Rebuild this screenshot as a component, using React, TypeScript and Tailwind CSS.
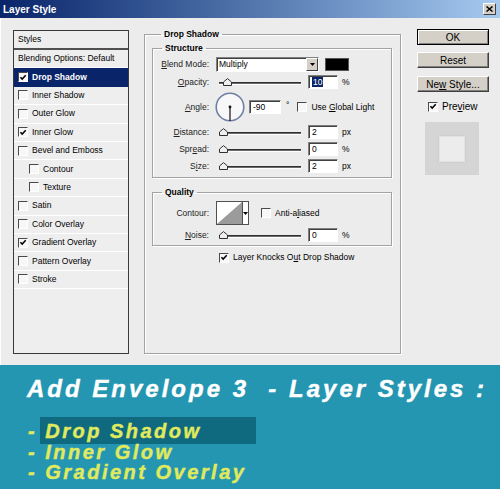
import type { ReactNode } from 'react'

const ui = "font-['Liberation_Sans',Arial,sans-serif]"

function Tick({ className = '' }: { className?: string }) {
  return (
    <svg viewBox="0 0 10 10" className={className}>
      <path d="M1.8 4.6 L4 7 L8.4 2.2" fill="none" stroke="currentColor" strokeWidth="1.9" />
    </svg>
  )
}

function Box({ on }: { on?: boolean }) {
  return (
    <span className="w-[10px] h-[10px] shrink-0 flex items-center justify-center border border-[#4a4a4a] border-r-white border-b-white bg-[#f7f7f7] text-black">
      {on && <Tick className="w-[9px] h-[9px]" />}
    </span>
  )
}

// mnemonic letter
function U({ children }: { children: ReactNode }) {
  return <span className="underline underline-offset-[1px]">{children}</span>
}

const sunken = 'border border-[#808080] border-r-white border-b-white shadow-[inset_1px_1px_0_#404040] bg-white'

function Field({ value, w = 30, selected }: { value: string; w?: number; selected?: boolean }) {
  return (
    <span className={`${sunken} h-[14px] shrink-0 flex items-center pl-[3px]`} style={{ width: w }}>
      {selected ? <span className="bg-[#0a246a] text-white leading-[10px] px-[1px]">{value}</span> : value}
    </span>
  )
}

function Slider({ at = 0 }: { at?: number }) {
  return (
    <span className="relative block w-[82px] h-[10px] shrink-0">
      <span className="absolute left-0 right-0 top-[5px] h-[3px] border-t border-[#303030] border-b border-b-white bg-[#6a6a6a]" />
      <svg className="absolute top-[1px]" style={{ left: at }} width="9" height="8" viewBox="0 0 9 8">
        <path d="M0.5 7.5 V4 L4.5 0.6 L8.5 4 V7.5 Z" fill="#efefef" stroke="#303030" />
      </svg>
    </span>
  )
}

function Label({ children }: { children: ReactNode }) {
  return <span className="w-[56px] shrink-0 text-right text-[#222]">{children}</span>
}

function SliderRow({ label, value, unit, at, selected }: { label: ReactNode; value: string; unit: string; at?: number; selected?: boolean }) {
  return (
    <div className="flex items-center h-[14px] mt-[3px]">
      <Label>{label}</Label>
      <span className="ml-[10px]"><Slider at={at} /></span>
      <span className="ml-[7px]"><Field value={value} selected={selected} /></span>
      <span className="ml-[4px]">{unit}</span>
    </div>
  )
}

function Btn({ children, main }: { children: ReactNode; main?: boolean }) {
  return (
    <div className={`h-[16px] w-[72px] flex items-center justify-center bg-[#d4d0c8] text-[10px] text-black ${main ? 'border border-black shadow-[inset_1px_1px_0_white,inset_-1px_-1px_0_#808080]' : 'border border-white border-r-[#404040] border-b-[#404040] shadow-[inset_-1px_-1px_0_#808080]'}`}>
      <span>{children}</span>
    </div>
  )
}

const effects: { name: ReactNode; on?: boolean; sub?: boolean; active?: boolean }[] = [
  { name: 'Drop Shadow', on: true, active: true },
  { name: 'Inner Shadow' },
  { name: 'Outer Glow' },
  { name: 'Inner Glow', on: true },
  { name: 'Bevel and Emboss' },
  { name: 'Contour', sub: true },
  { name: 'Texture', sub: true },
  { name: 'Satin' },
  { name: 'Color Overlay' },
  { name: 'Gradient Overlay', on: true },
  { name: 'Pattern Overlay' },
  { name: 'Stroke' },
]

function StyleList() {
  return (
    <div className="mt-[12px] ml-[12px] w-[116px] h-[324px] border border-[#3a3a3a] bg-[#eeeeee] flex flex-col">
      <div className="h-[19px] shrink-0 flex items-center pl-[4px] border-b-2 border-[#505050]">Styles</div>
      <div className="h-[18.4px] shrink-0 flex items-center pl-[4px] border-b border-white">Blending Options: Default</div>
      {effects.map((e, i) => (
        <div
          key={i}
          className={`h-[18.4px] shrink-0 flex items-center gap-[4px] border-b ${e.active ? 'bg-[#0a246a] text-white font-bold border-[#0a246a]' : 'border-white'} ${e.sub ? 'pl-[15px]' : 'pl-[4px]'}`}
        >
          <Box on={e.on} />
          <span>{e.name}</span>
        </div>
      ))}
    </div>
  )
}

const etched = 'border border-[#a2a2a2] shadow-[1px_1px_0_white,inset_1px_1px_0_white]'

function DropShadowPanel() {
  return (
    <fieldset className={`mt-[10px] ml-[15px] w-[257px] h-[326px] px-[7px] ${etched}`}>
      <legend className="ml-[9px] px-[3px] font-bold leading-[12px]">Drop Shadow</legend>

      <fieldset className={`mt-[2px] w-[240px] pb-[4px] ${etched}`}>
        <legend className="ml-[9px] px-[3px] font-bold leading-[12px]">Structure</legend>

        <div className="flex items-center h-[15px] mt-[3px]">
          <Label><U>B</U>lend Mode:</Label>
          <span className={`${sunken} ml-[7px] w-[103px] h-[15px] flex items-center justify-between pl-[2px]`}>
            <span>Multiply</span>
            <span className="w-[12px] h-[13px] bg-[#d4d0c8] border border-white border-r-[#404040] border-b-[#404040] flex items-center justify-center">
              <svg width="5" height="3" viewBox="0 0 5 3"><path d="M0 0 H5 L2.5 3 Z" fill="#000" /></svg>
            </span>
          </span>
          <span className="ml-[6px] w-[24px] h-[13px] bg-black border border-[#555]" />
        </div>

        <SliderRow label={<><U>O</U>pacity:</>} value="10" unit="%" at={4} selected />

        <div className="flex items-center h-[30px] mt-[3px]">
          <Label><U>A</U>ngle:</Label>
          <svg className="ml-[6px] shrink-0" width="30" height="30" viewBox="0 0 30 30">
            <circle cx="15" cy="15" r="13.8" fill="#f8f8f8" stroke="#6e7fa3" strokeWidth="1.6" />
            <line x1="15" y1="15" x2="15" y2="29" stroke="#111" strokeWidth="1.2" />
            <circle cx="15" cy="15" r="1.4" fill="#111" />
          </svg>
          <span className="ml-[4px]"><Field value="-90" w={32} /></span>
          <span className="ml-[5px] -mt-[4px]">°</span>
          <span className="ml-[8px]"><Box /></span>
          <span className="ml-[4px]">Use <U>G</U>lobal Light</span>
        </div>

        <SliderRow label={<><U>D</U>istance:</>} value="2" unit="px" />
        <SliderRow label={<>Spr<U>e</U>ad:</>} value="0" unit="%" />
        <SliderRow label={<>S<U>i</U>ze:</>} value="2" unit="px" />
      </fieldset>

      <fieldset className={`mt-[8px] w-[240px] pb-[3px] ${etched}`}>
        <legend className="ml-[9px] px-[3px] font-bold leading-[12px]">Quality</legend>

        <div className="flex items-center h-[24px] mt-[3px]">
          <Label>Contour:</Label>
          <span className="ml-[7px] w-[33px] h-[24px] flex border border-[#505050] bg-white">
            <svg width="25" height="22" viewBox="0 0 25 22" className="shrink-0">
              <path d="M0 22 L25 0 V22 Z" fill="#9b9b9b" />
            </svg>
            <span className="flex-1 border-l border-[#505050] flex items-center justify-center">
              <svg width="5" height="3" viewBox="0 0 5 3"><path d="M0 0 H5 L2.5 3 Z" fill="#000" /></svg>
            </span>
          </span>
          <span className="ml-[12px]"><Box /></span>
          <span className="ml-[4px]">Anti-a<U>l</U>iased</span>
        </div>

        <div className="mt-[2px]">
          <SliderRow label={<><U>N</U>oise:</>} value="0" unit="%" />
        </div>
      </fieldset>

      <div className="flex items-center h-[11px] mt-[6px] ml-[67px]">
        <Box on />
        <span className="ml-[4px]">Layer Knocks O<U>u</U>t Drop Shadow</span>
      </div>
    </fieldset>
  )
}

function SideButtons() {
  return (
    <div className="mt-[11px] ml-[16px] w-[72px] flex flex-col">
      <Btn main>OK</Btn>
      <div className="mt-[7px]"><Btn>Reset</Btn></div>
      <div className="mt-[8px]"><Btn>Ne<U>w</U> Style...</Btn></div>
      <div className="mt-[7px] ml-[11px] flex items-center text-[10px]">
        <Box on />
        <span className="ml-[4px]">Pre<U>v</U>iew</span>
      </div>
      <div className="mt-[8px] ml-[8px] w-[54px] h-[53px] bg-[#d5d5d5] flex items-center justify-center">
        <div className="w-[26px] h-[26px] bg-[#ececec] border border-[#e2e2e2] shadow-[0_0_2px_#c4c4c4]" />
      </div>
    </div>
  )
}

export default function App() {
  return (
    <div className={`w-[500px] h-[489px] overflow-hidden flex flex-col ${ui}`}>
      <div className="h-[18px] shrink-0 flex items-center justify-between pl-[3px] pr-[4px] bg-gradient-to-r from-[#0a246a] to-[#a6caf0]">
        <span className="text-white font-bold text-[10px]">Layer Style</span>
        <span className="w-[13px] h-[12px] bg-[#d4d0c8] border border-white border-r-[#404040] border-b-[#404040] flex items-center justify-center">
          <svg width="7" height="6" viewBox="0 0 7 6"><path d="M0.5 0.5 L6.5 5.5 M6.5 0.5 L0.5 5.5" stroke="#000" strokeWidth="1.5" /></svg>
        </span>
      </div>

      <div className="h-[347px] shrink-0 flex items-start bg-[#ececec] text-[8.5px] text-black border-l border-white">
        <StyleList />
        <DropShadowPanel />
        <SideButtons />
      </div>

      <div className="flex-1 bg-[#2596b1] font-bold italic [-webkit-text-stroke:0.4px_currentColor]">
        <div className="pt-[10px] pl-[27px] text-[24px] leading-[28px] tracking-[3px] text-white whitespace-pre">
          Add Envelope 3  - Layer Styles :
        </div>
        <div className="relative mt-[18px] pl-[28px] text-[20px] leading-[20.5px] tracking-[2.5px] text-[#e0ea5c]">
          <div className="absolute left-[40px] top-[-4px] w-[216px] h-[27px] bg-[#0f6a80]" />
          <div className="relative">- Drop Shadow</div>
          <div className="relative">- Inner Glow</div>
          <div className="relative">- Gradient Overlay</div>
        </div>
      </div>
    </div>
  )
}
